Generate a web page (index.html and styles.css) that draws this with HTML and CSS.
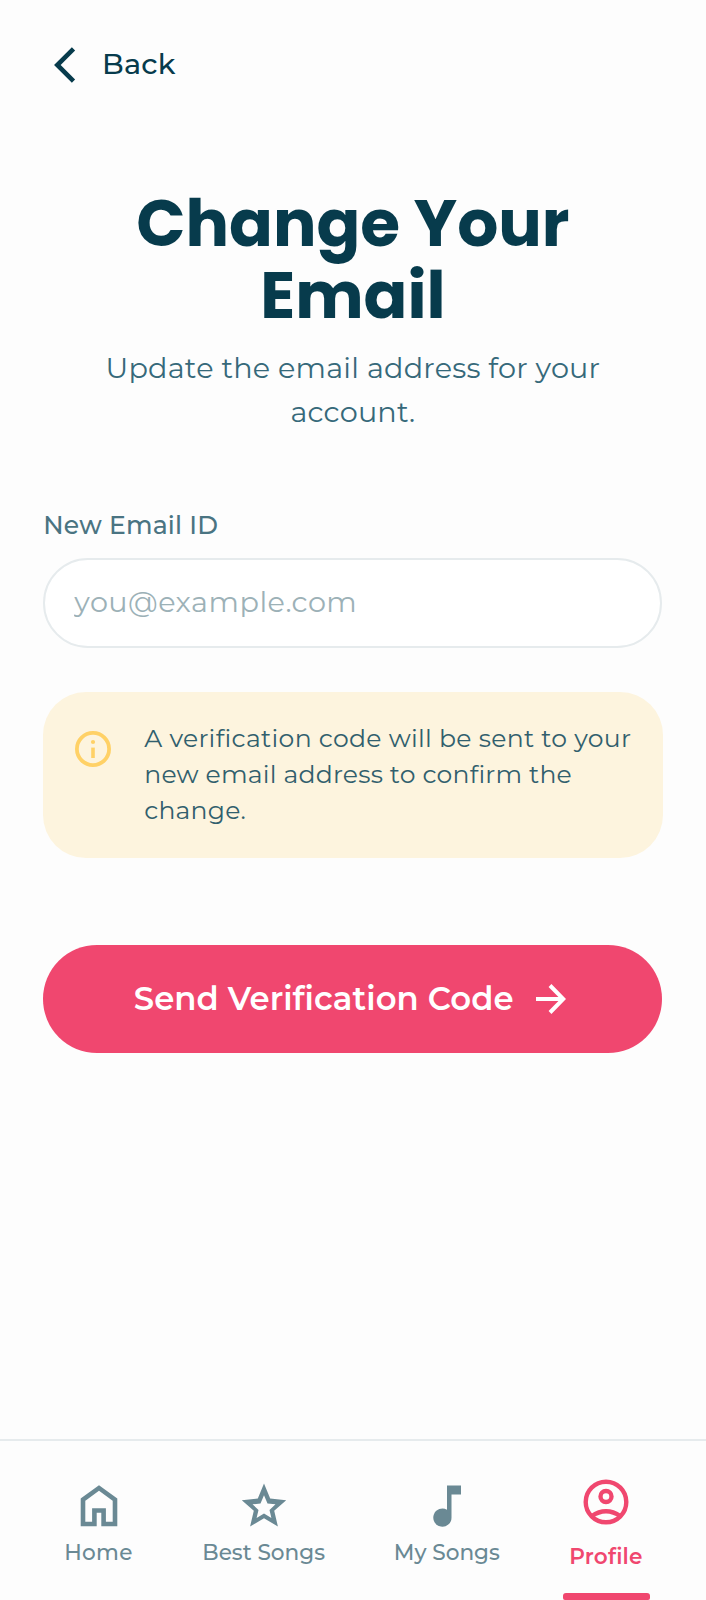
FILE: index.html
```html
<!DOCTYPE html>
<html lang="en">
<head>
<meta charset="utf-8">
<title>Change Your Email</title>
<link rel="stylesheet" href="styles.css">
</head>
<body>
<div class="screen">
  <header class="topbar">
    <a class="back">
      <svg class="back-icon" width="22" height="36" viewBox="0 0 22 36"><path d="M19.500 1.800 3.300 18l16.200 16.200" fill="none" stroke="currentColor" stroke-width="4.600"/></svg>
      <span class="back-text">Back</span>
    </a>
  </header>
  <main class="content">
    <h1 class="title">Change Your Email</h1>
    <p class="subtitle">Update the email address for your account.</p>
    <label class="label" for="email">New Email ID</label>
    <input class="input" id="email" type="email" placeholder="you@example.com">
    <div class="notice">
      <svg class="notice-icon" width="36" height="36" viewBox="0 0 36 36"><circle cx="18" cy="18" r="16.100" fill="none" stroke="currentColor" stroke-width="3.800"/><circle cx="18" cy="11" r="2.100" fill="currentColor"/><path d="M16.200 16.600h3.600V27h-3.600z" fill="currentColor"/></svg>
      <p class="notice-text"><span class="notice-lead">A verification code will be sent to your</span><br>new email address to confirm the<br>change.</p>
    </div>
    <button class="submit" type="button">
      <span class="submit-text">Send Verification Code</span>
      <svg class="submit-icon" width="30" height="30" viewBox="0 0 30 30"><path d="M0 15h27M14 1.500 27.300 15 14 28.500" fill="none" stroke="currentColor" stroke-width="4"/></svg>
    </button>
  </main>
  <nav class="nav">
    <a class="tab tab-home">
      <svg width="46" height="46" viewBox="0 0 46 46"><path d="M7 16.600 23 5l16 11.600V41H27.600V27.500h-9.200V41H7z" fill="none" stroke="currentColor" stroke-width="4.600"/></svg>
      <span class="tab-text">Home</span>
    </a>
    <a class="tab tab-best">
      <svg width="46" height="46" viewBox="0 0 46 46"><path fill="currentColor" fill-rule="evenodd" d="m23 .5 6.200 15.100L45.200 17.200 33.200 27.800 36.900 43.500 23 35.200 9.100 43.500l3.700-15.700L.8 17.200l16-1.600zM23 12.200l-3.500 8.300-8 .8 6 5.600-1.900 8 7.400-4.500 7.400 4.500-1.900-8 6-5.600-8-.8z"/></svg>
      <span class="tab-text">Best Songs</span>
    </a>
    <a class="tab tab-my">
      <svg width="46" height="46" viewBox="0 0 46 46"><path fill="currentColor" d="M23 2.500h14v9h-9.500V34.600a9.100 9.100 0 1 1-4.500-7.800z"/></svg>
      <span class="tab-text">My Songs</span>
    </a>
    <a class="tab tab-profile">
      <svg width="46" height="46" viewBox="0 0 46 46"><g fill="none" stroke="currentColor" stroke-width="4.400"><circle cx="23" cy="23" r="20.300"/><circle cx="23" cy="17.500" r="5.500"/><path d="M8.500 37.200Q23 27.200 37.500 37.200"/></g></svg>
      <span class="tab-text">Profile</span>
      <i class="indicator"></i>
    </a>
  </nav>
</div>
</body>
</html>
```
FILE: styles.css
```css
* { box-sizing: border-box; }
body {
  margin: 0;
  background: #fdfdfd;
  color: #073b4c;
  font-family: Montserrat, Inter, "Open Sans", sans-serif;
}
.screen { display: flex; flex-direction: column; width: 706px; height: 1600px; }
.topbar { height: 130px; padding: 47px 0 0 54px; }
.back { display: inline-flex; align-items: center; height: 36px; gap: 26px; }
.back-text { margin-top: -2px; font-size: 28.700px; font-weight: 500; line-height: 36px; letter-spacing: 0.200px; }
.content { flex: 1; padding: 58px 43.500px 0 43.300px; }
.title {
  margin: 0 80px;
  text-align: center;
  font-family: Poppins, Inter, sans-serif;
  font-size: 64.600px;
  font-weight: 700;
  line-height: 72px;
}
.subtitle {
  margin: 14px 50px 0;
  color: #36697a;
  text-align: center;
  font-size: 28.700px;
  font-weight: 400;
  line-height: 43.500px;
  letter-spacing: 0.200px;
}
.label {
  display: block;
  margin-top: 76px;
  color: #4a7482;
  font-size: 25.100px;
  font-weight: 500;
  line-height: 32px;
  letter-spacing: 0.200px;
}
.input {
  display: block;
  width: 619px;
  height: 90px;
  margin-top: 16.500px;
  padding: 0 28px 3px 29px;
  border: 2px solid #e6ebed;
  border-radius: 45px;
  background: #fff;
  font: 400 28.700px Montserrat, Inter, sans-serif;
  letter-spacing: 0.480px;
}
.input::placeholder { color: #9cb1b7; opacity: 1; }
.notice {
  display: flex;
  height: 166px;
  margin-top: 44.300px;
  padding: 28.500px 32px 30px;
  gap: 33px;
  border-radius: 43px;
  background: #fdf4de;
}
.notice-icon { flex: none; margin-top: 11px; color: #ffd166; }
.notice-text {
  margin: 0;
  color: #315f6d;
  font-size: 25.100px;
  font-weight: 400;
  line-height: 36px;
  letter-spacing: 0.200px;
  white-space: nowrap;
}
.notice-lead { letter-spacing: 0.300px; }
.submit {
  display: flex;
  align-items: center;
  gap: 22px;
  width: 619px;
  height: 108px;
  margin-top: 87px;
  padding: 0 0 0 90.500px;
  border: 0;
  border-radius: 54px;
  background: #f0476f;
  color: #fff;
  font: 600 32.300px Montserrat, Inter, sans-serif;
  letter-spacing: 0.060px;
  white-space: nowrap;
}
.submit-text { margin-top: -1px; }
.nav {
  display: flex;
  justify-content: space-between;
  height: 161px;
  padding: 42px 64px 0 65px;
  border-top: 2px solid #e6ebed;
  color: #6a8994;
}
.tab {
  position: relative;
  display: flex;
  flex-direction: column;
  align-items: center;
  font-size: 21.600px;
  font-weight: 500;
  white-space: nowrap;
}
.tab-text { margin-top: 9px; line-height: 28px; }
.tab-home { width: 67px; letter-spacing: 0.300px; }
.tab-best { width: 120px; }
.tab-my { width: 103px; }
.tab-profile { width: 72px; margin-top: -4px; color: #f0476f; font-weight: 600; letter-spacing: 0.200px; }
.tab-profile .tab-text { margin-top: 17px; }
.indicator {
  position: absolute;
  bottom: 0;
  left: 50%;
  width: 87px;
  height: 7px;
  margin-left: -43px;
  border-radius: 3px 3px 2px 2px;
  background: currentColor;
}
```
